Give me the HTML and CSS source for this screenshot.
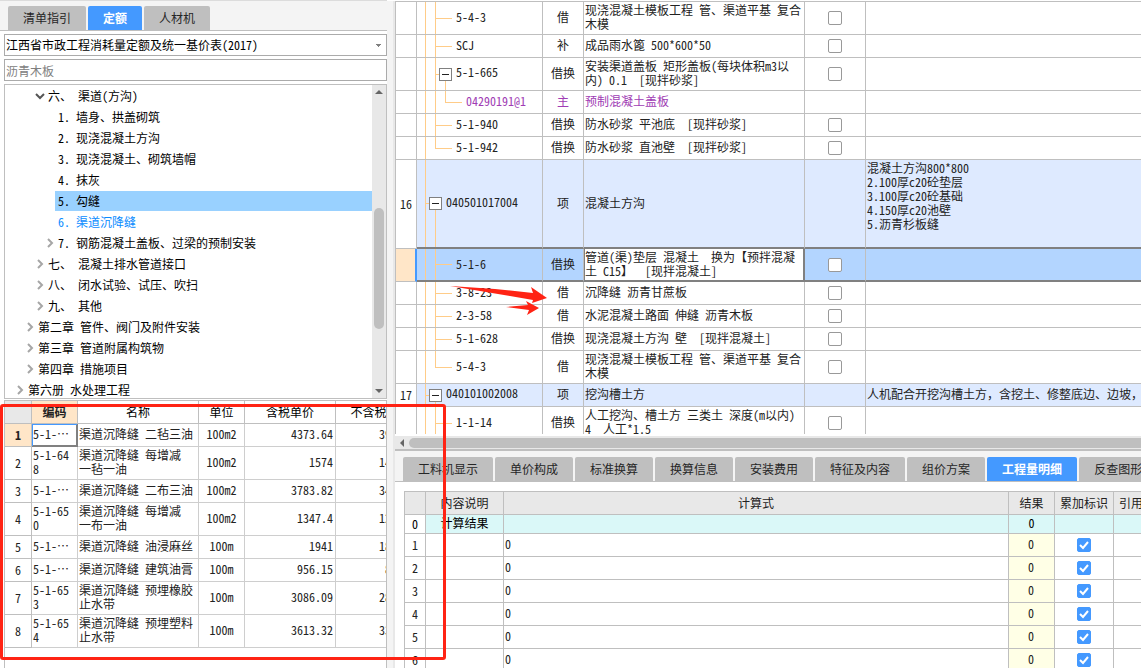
FILE: index.html
```html
<!DOCTYPE html>
<html lang="zh-CN">
<head>
<meta charset="utf-8">
<title>定额</title>
<link rel="stylesheet" href="styles.css">
</head>
<body>
<div class="app">
  <aside class="side">
    <nav class="tabs side-tabs">
      <button class="tab">清单指引</button>
      <button class="tab active">定额</button>
      <button class="tab">人材机</button>
    </nav>
    <div class="filters">
      <select class="field" aria-label="定额库"><option>江西省市政工程消耗量定额及统一基价表(2017)</option></select>
      <input class="field" type="text" aria-label="搜索" placeholder="沥青木板">
    </div>
    <div class="tree-box">
      <ul class="tree">
        <li class="lv2"><svg class="chev" viewBox="0 0 10 10"><path class="open" d="M1 3l4 4 4-4"/></svg><span>六、 渠道(方沟)</span></li>
        <li class="lv3"><i class="chev"></i><span>1. 墙身、拱盖砌筑</span></li>
        <li class="lv3"><i class="chev"></i><span>2. 现浇混凝土方沟</span></li>
        <li class="lv3"><i class="chev"></i><span>3. 现浇混凝土、砌筑墙帽</span></li>
        <li class="lv3"><i class="chev"></i><span>4. 抹灰</span></li>
        <li class="lv3 picked"><i class="chev"></i><span>5. 勾缝</span></li>
        <li class="lv3 linked"><i class="chev"></i><span>6. 渠道沉降缝</span></li>
        <li class="lv3"><svg class="chev" viewBox="0 0 10 10"><path d="M3 1l4 4-4 4"/></svg><span>7. 钢筋混凝土盖板、过梁的预制安装</span></li>
        <li class="lv2"><svg class="chev" viewBox="0 0 10 10"><path d="M3 1l4 4-4 4"/></svg><span>七、 混凝土排水管道接口</span></li>
        <li class="lv2"><svg class="chev" viewBox="0 0 10 10"><path d="M3 1l4 4-4 4"/></svg><span>八、 闭水试验、试压、吹扫</span></li>
        <li class="lv2"><svg class="chev" viewBox="0 0 10 10"><path d="M3 1l4 4-4 4"/></svg><span>九、 其他</span></li>
        <li class="lv1"><svg class="chev" viewBox="0 0 10 10"><path d="M3 1l4 4-4 4"/></svg><span>第二章 管件、阀门及附件安装</span></li>
        <li class="lv1"><svg class="chev" viewBox="0 0 10 10"><path d="M3 1l4 4-4 4"/></svg><span>第三章 管道附属构筑物</span></li>
        <li class="lv1"><svg class="chev" viewBox="0 0 10 10"><path d="M3 1l4 4-4 4"/></svg><span>第四章 措施项目</span></li>
        <li class="lv0"><svg class="chev" viewBox="0 0 10 10"><path d="M3 1l4 4-4 4"/></svg><span>第六册 水处理工程</span></li>
      </ul>
      <div class="vbar">
        <svg class="arrow" viewBox="0 0 8 4"><path d="M0 4L4 0l4 4z"/></svg>
        <div class="vthumb"></div>
        <svg class="arrow" viewBox="0 0 8 4"><path d="M0 0l4 4 4-4z"/></svg>
      </div>
    </div>
    <div class="quota">
      <table class="quota-table">
        <colgroup><col class="q-no"><col class="q-code"><col class="q-name"><col class="q-unit"><col class="q-price"><col class="q-net"></colgroup>
        <thead><tr><th class="corner"></th><th class="hot">编码</th><th>名称</th><th>单位</th><th>含税单价</th><th>不含税单价</th></tr></thead>
        <tbody>
          <tr><th class="hot">1</th><td class="code focus">5-1-…</td><td>渠道沉降缝 二毡三油</td><td class="mid">100m2</td><td class="num">4373.64</td><td class="net">3977.48</td></tr>
          <tr class="tall"><th>2</th><td class="code">5-1-648</td><td>渠道沉降缝 每增减<br>一毡一油</td><td class="mid">100m2</td><td class="num">1574</td><td class="net">1431.22</td></tr>
          <tr><th>3</th><td class="code">5-1-…</td><td>渠道沉降缝 二布三油</td><td class="mid">100m2</td><td class="num">3783.82</td><td class="net">3440.16</td></tr>
          <tr class="tall"><th>4</th><td class="code">5-1-650</td><td>渠道沉降缝 每增减<br>一布一油</td><td class="mid">100m2</td><td class="num">1347.4</td><td class="net">1225.17</td></tr>
          <tr><th>5</th><td class="code">5-1-…</td><td>渠道沉降缝 油浸麻丝</td><td class="mid">100m</td><td class="num">1941</td><td class="net">1808.31</td></tr>
          <tr><th>6</th><td class="code">5-1-…</td><td>渠道沉降缝 建筑油膏</td><td class="mid">100m</td><td class="num">956.15</td><td class="net">&nbsp;878.54</td></tr>
          <tr class="tall"><th>7</th><td class="code">5-1-653</td><td>渠道沉降缝 预埋橡胶<br>止水带</td><td class="mid">100m</td><td class="num">3086.09</td><td class="net">2810.67</td></tr>
          <tr class="tall"><th>8</th><td class="code">5-1-654</td><td>渠道沉降缝 预埋塑料<br>止水带</td><td class="mid">100m</td><td class="num">3613.32</td><td class="net">3310.28</td></tr>
        </tbody>
      </table>
    </div>
  </aside>
  <div class="splitter"></div>
  <main class="main">
    <section class="bill">
      <div class="bill-view">
        <table class="bill-table">
          <colgroup><col class="b-no"><col class="b-code"><col class="b-kind"><col class="b-name"><col class="b-tick"><col></colgroup>
          <tbody>
            <tr class="tall"><th></th><td class="branch mid-node">5-4-3</td><td class="mid">借</td><td>现浇混凝土模板工程 管、渠道平基 复合<br>木模</td><td class="mid tick"><input type="checkbox" aria-label="5-4-3"></td><td></td></tr>
            <tr><th></th><td class="branch mid-node">SCJ</td><td class="mid">补</td><td>成品雨水篦 500*600*50</td><td class="mid tick"><input type="checkbox" aria-label="SCJ"></td><td></td></tr>
            <tr class="tall"><th></th><td class="branch sub-open"><button class="fold" aria-label="折叠"></button>5-1-665</td><td class="mid">借换</td><td>安装渠道盖板 矩形盖板(每块体积m3以<br>内) 0.1&nbsp; [现拌砂浆]</td><td class="mid tick"><input type="checkbox" aria-label="5-1-665"></td><td></td></tr>
            <tr class="material"><th></th><td class="branch leaf">04290191@1</td><td class="mid">主</td><td>预制混凝土盖板</td><td></td><td></td></tr>
            <tr><th></th><td class="branch mid-node">5-1-940</td><td class="mid">借换</td><td>防水砂浆 平池底&nbsp; [现拌砂浆]</td><td class="mid tick"><input type="checkbox" aria-label="5-1-940"></td><td></td></tr>
            <tr><th></th><td class="branch end-node">5-1-942</td><td class="mid">借换</td><td>防水砂浆 直池壁&nbsp; [现拌砂浆]</td><td class="mid tick"><input type="checkbox" aria-label="5-1-942"></td><td></td></tr>
            <tr class="item big"><th>16</th><td class="branch root-open"><button class="fold" aria-label="折叠"></button>040501017004</td><td class="mid">项</td><td>混凝土方沟</td><td></td><td class="desc">混凝土方沟800*800<br>2.100厚c20砼垫层<br>3.100厚c20砼基础<br>4.150厚c20池壁<br>5.沥青杉板缝</td></tr>
            <tr class="tall current"><th></th><td class="branch mid-node">5-1-6</td><td class="mid">借换</td><td class="editing">管道(渠)垫层 混凝土&nbsp; 换为【预拌混凝<br>土 C15】&nbsp; [现拌混凝土]</td><td class="mid tick"><input type="checkbox" aria-label="5-1-6"></td><td></td></tr>
            <tr><th></th><td class="branch mid-node">3-8-23</td><td class="mid">借</td><td>沉降缝 沥青甘蔗板</td><td class="mid tick"><input type="checkbox" aria-label="3-8-23"></td><td></td></tr>
            <tr><th></th><td class="branch mid-node">2-3-58</td><td class="mid">借</td><td>水泥混凝土路面 伸缝 沥青木板</td><td class="mid tick"><input type="checkbox" aria-label="2-3-58"></td><td></td></tr>
            <tr><th></th><td class="branch mid-node">5-1-628</td><td class="mid">借换</td><td>现浇混凝土方沟 壁&nbsp; [现拌混凝土]</td><td class="mid tick"><input type="checkbox" aria-label="5-1-628"></td><td></td></tr>
            <tr class="tall"><th></th><td class="branch end-node">5-4-3</td><td class="mid">借</td><td>现浇混凝土模板工程 管、渠道平基 复合<br>木模</td><td class="mid tick"><input type="checkbox" aria-label="5-4-3"></td><td></td></tr>
            <tr class="item"><th>17</th><td class="branch root-open"><button class="fold" aria-label="折叠"></button>040101002008</td><td class="mid">项</td><td>挖沟槽土方</td><td></td><td class="wide">人机配合开挖沟槽土方，含挖土、修整底边、边坡，</td></tr>
            <tr class="tall"><th></th><td class="branch mid-node">1-1-14</td><td class="mid">借换</td><td>人工挖沟、槽土方 三类土 深度(m以内)<br>4&nbsp; 人工*1.5</td><td class="mid tick"><input type="checkbox" aria-label="1-1-14"></td><td></td></tr>
          </tbody>
        </table>
      </div>
      <div class="hbar">
        <svg class="arrow-left" viewBox="0 0 4 8"><path d="M4 0L0 4l4 4z"/></svg>
        <div class="hthumb"></div>
      </div>
    </section>
    <section class="detail">
      <nav class="tabs">
        <button class="tab">工料机显示</button>
        <button class="tab">单价构成</button>
        <button class="tab">标准换算</button>
        <button class="tab">换算信息</button>
        <button class="tab">安装费用</button>
        <button class="tab">特征及内容</button>
        <button class="tab">组价方案</button>
        <button class="tab active">工程量明细</button>
        <button class="tab">反查图形工程量</button>
      </nav>
      <div class="calc-view">
        <table class="calc-table">
          <colgroup><col class="c-no"><col class="c-note"><col><col class="c-sum"><col class="c-flag"><col class="c-ref"></colgroup>
          <thead><tr><th></th><th>内容说明</th><th>计算式</th><th>结果</th><th>累加标识</th><th class="ref">引用代码</th></tr></thead>
          <tbody>
            <tr class="total"><th>0</th><td class="mid">计算结果</td><td></td><td class="mid">0</td><td></td><td></td></tr>
            <tr><th>1</th><td></td><td>0</td><td class="sum">0</td><td class="mid tick"><input type="checkbox" checked aria-label="累加 1"></td><td></td></tr>
            <tr><th>2</th><td></td><td>0</td><td class="sum">0</td><td class="mid tick"><input type="checkbox" checked aria-label="累加 2"></td><td></td></tr>
            <tr><th>3</th><td></td><td>0</td><td class="sum">0</td><td class="mid tick"><input type="checkbox" checked aria-label="累加 3"></td><td></td></tr>
            <tr><th>4</th><td></td><td>0</td><td class="sum">0</td><td class="mid tick"><input type="checkbox" checked aria-label="累加 4"></td><td></td></tr>
            <tr><th>5</th><td></td><td>0</td><td class="sum">0</td><td class="mid tick"><input type="checkbox" checked aria-label="累加 5"></td><td></td></tr>
            <tr><th>6</th><td></td><td>0</td><td class="sum">0</td><td class="mid tick"><input type="checkbox" checked aria-label="累加 6"></td><td></td></tr>
          </tbody>
        </table>
      </div>
    </section>
  </main>
  <div class="mark-box"></div>
  <svg class="mark-arrows" viewBox="0 0 100 34" aria-hidden="true">
    <path d="M0 2L45 5 83 9 81 3 97 14 82 19 83 16 60 12 30 7z"/>
    <path d="M56 23L78 21 76 17 89 24 77 31 79 26z"/>
  </svg>
</div>
</body>
</html>
```
FILE: styles.css
```css
* { box-sizing: border-box; }

body {
  margin: 0;
  font-family: "Noto Sans CJK SC", sans-serif;
  font-feature-settings: "hwid";
  font-size: 12px;
  line-height: 14px;
  color: #222;
  background: #fff;
}

button, input, select {
  font: inherit;
  font-feature-settings: inherit;
  color: inherit;
  margin: 0;
}

.app {
  position: relative;
  display: grid;
  grid-template-columns: 387px 8px minmax(0, 1fr);
  grid-template-rows: minmax(0, 1fr);
  height: 100vh;
  overflow: hidden;
}

/* tabs */
.tabs {
  display: flex;
  gap: 2px;
  padding: 6px 0 0 8px;
  background: #f4f4f4;
  border-bottom: 1px solid #bfbfbf;
  overflow: hidden;
}
.tab {
  flex: none;
  height: 24px;
  padding: 0 15px;
  border: 0;
  border-radius: 2px 2px 0 0;
  background: #bfbfbf;
  color: #262626;
}
.tab.active {
  background: #4499ff;
  color: #fff;
  font-weight: 700;
}

/* left side */
.side {
  display: grid;
  grid-template-rows: auto auto minmax(0, 315fr) minmax(0, 269fr);
  min-width: 0;
}
.side-tabs { border-top: 1px solid #dcdcdc; padding-top: 5px; }
.filters {
  display: grid;
  gap: 3px;
  padding: 3px 0 3px 4px;
}
.field {
  width: 100%;
  height: 22px;
  padding: 0 1px;
  border: 1px solid #ababab;
  border-radius: 0;
  background: #fff;
  color: #000;
  outline: 0;
}
select.field {
  appearance: none;
  background: linear-gradient(#808080, #808080) right 5px top 9px / 5px 1px no-repeat,
    linear-gradient(#808080, #808080) right 6px top 10px / 3px 1px no-repeat,
    linear-gradient(#808080, #808080) right 7px top 11px / 1px 1px no-repeat, #fff;
}
.field::placeholder { color: #808080; opacity: 1; }

.tree-box {
  display: flex;
  margin-left: 4px;
  border: 1px solid #bfbfbf;
  overflow: hidden;
}
.tree {
  flex: 1;
  margin: 0;
  padding: 0;
  list-style: none;
  color: #000;
}
.tree li { display: flex; align-items: center; height: 21px; }
.tree span { flex: 1; padding-left: 3px; line-height: 20px; white-space: nowrap; }
.chev { flex: none; width: 10px; height: 10px; }
.chev path { fill: none; stroke: #a6a6a6; stroke-width: 2; }
.chev .open { stroke: #555; }
.lv0 { padding-left: 10px; }
.lv1 { padding-left: 20px; }
.lv2 { padding-left: 30px; }
.lv3 { padding-left: 40px; }
.picked span { background: #99d1ff; }
.linked { color: #0a8cff; }

.vbar {
  display: flex;
  flex-direction: column;
  align-items: center;
  justify-content: space-between;
  width: 14px;
  padding: 5px 0;
  background: #e8e8e8;
}
.arrow { width: 8px; height: 4px; fill: #666; }
.vthumb { width: 10px; height: 40%; margin-top: 54px; border-radius: 5px; background: #bfbfbf; }

/* tables */
table { border-collapse: separate; border-spacing: 0; table-layout: fixed; }
th, td {
  height: 23px;
  padding: 0 2px 0 1px;
  border: solid #bfbfbf;
  border-width: 0 1px 1px 0;
  font-weight: 400;
  text-align: left;
  white-space: nowrap;
  overflow: hidden;
}
td { padding-bottom: 2px; }
th { padding: 0; text-align: center; }
.mid { text-align: center; padding-left: 0; padding-right: 0; }
.tick { padding-bottom: 0; }
.wide { font-feature-settings: normal; }
.tall > * { height: 33px; }

.quota {
  margin: 1px 0 0 4px;
  border: solid #bfbfbf;
  border-width: 1px 1px 0;
  overflow: hidden;
}
.quota-table { width: 422px; border-left: 1px solid #bfbfbf; margin-left: -1px; }
.quota td { border-color: #cecece; }
.quota thead th { color: #000; }
.q-no { width: 27px; }
.q-code { width: 46px; }
.q-name { width: 121px; }
.q-unit { width: 46px; }
.q-price { width: 91px; }
.q-net { width: 90px; }
.quota .corner { background: #e8e8e8; }
.quota .hot { background: #ffe6c8; font-weight: 700; color: #222; }
.quota .code { white-space: normal; word-break: break-all; padding-right: 4px; }
.quota .num { text-align: right; }
.quota .net { padding-left: 43px; }
.quota .focus { box-shadow: inset 1px 1px #4499ff, inset -1px -1px #808080; border-color: #808080; }

.splitter {
  margin-top: 1px;
  background: #f4f4f4;
  border-right: 2px solid #e8e8e8;
}

/* bill grid */
.main {
  display: grid;
  grid-template-rows: minmax(0, 451fr) minmax(0, 217fr);
  min-width: 0;
}
.bill {
  display: flex;
  flex-direction: column;
  padding-top: 1px;
  border-bottom: 2px solid #bfbfbf;
}
.bill-view { flex: 1; min-height: 0; overflow: hidden; margin-bottom: 2px; border: solid #bfbfbf; border-width: 1px 0 0 1px; }
.bill-table { width: 100%; }
.b-no { width: 21px; }
.b-code { width: 126px; }
.b-kind { width: 41px; }
.b-name { width: 221px; }
.b-tick { width: 61px; }
.bill-table td:last-child { border-right: 0; }
.item td { background-color: #deeaff; }
.big > * { height: 89px; border-bottom: 2px solid #808080; }
.big th { border-bottom: 1px solid #bfbfbf; }
.desc { vertical-align: top; padding-top: 1px; }
.material { color: #a03cb4; }
.current td { background-color: #b3d5ff; border-bottom: 2px solid #808080; }
.current th { background: #ffe6c8; border-right: 2px solid #4499ff; }
.current .editing { background: #fff; border-right: 2px solid #808080; box-shadow: inset 1px 0 #808080; }

.branch {
  --line: linear-gradient(#ffcc88, #ffcc88);
  background-repeat: no-repeat;
  vertical-align: middle;
}
.mid-node {
  padding-left: 39px;
  background-image: var(--line), var(--line), var(--line);
  background-position: 8px 0, 18px 0, 18px 50%;
  background-size: 1px 100%, 1px 100%, 17px 1px;
}
.end-node {
  padding-left: 39px;
  background-image: var(--line), var(--line), var(--line);
  background-position: 8px 0, 18px 0, 18px 50%;
  background-size: 1px 100%, 1px 50%, 17px 1px;
}
.sub-open {
  padding-left: 22px;
  background-image: var(--line), var(--line), var(--line), var(--line);
  background-position: 8px 0, 18px 0, 18px 50%, 28px 100%;
  background-size: 1px 100%, 1px 100%, 6px 1px, 1px 50%;
}
.leaf {
  padding-left: 49px;
  background-image: var(--line), var(--line), var(--line), var(--line);
  background-position: 8px 0, 18px 0, 28px 0, 28px 50%;
  background-size: 1px 100%, 1px 100%, 1px 50%, 17px 1px;
}
.root-open {
  padding-left: 12px;
  background-image: var(--line), var(--line), var(--line);
  background-position: 8px 0, 8px 50%, 18px 100%;
  background-size: 1px 100%, 6px 1px, 1px 50%;
}
.fold {
  width: 13px;
  height: 13px;
  margin-right: 4px;
  padding: 0;
  border: 1px solid #808080;
  vertical-align: middle;
  background: linear-gradient(#222, #222) center / 7px 1px no-repeat, #fff;
}

input[type="checkbox"] {
  appearance: none;
  display: block;
  width: 14px;
  height: 14px;
  margin: 0 auto;
  border: 1px solid #999;
  border-radius: 2px;
  background: #fff;
}
input[type="checkbox"]:checked {
  border-color: #4499ff;
  background: #4499ff url("data:image/svg+xml,%3Csvg xmlns='http://www.w3.org/2000/svg' viewBox='0 0 12 12'%3E%3Cpath d='M2 6l3 3 5-6' fill='none' stroke='white' stroke-width='2'/%3E%3C/svg%3E") center / 12px 12px no-repeat;
}

.hbar {
  display: flex;
  align-items: center;
  gap: 5px;
  height: 13px;
  padding-left: 5px;
  background: #e8e8e8;
}
.arrow-left { width: 4px; height: 8px; fill: #666; }
.hthumb { flex: 1; height: 10px; border-radius: 5px 0 0 5px; background: #bfbfbf; }

/* calculation detail */
.detail { min-width: 0; overflow: hidden; }
.calc-view { padding: 9px 0 0 9px; overflow: hidden; }
.calc-table { width: calc(100% + 29px); border: solid #bfbfbf; border-width: 1px 0 0 1px; }
.calc-table thead th { background: #e8e8e8; }
.calc-table .ref { text-align: left; padding-left: 5px; }
.c-no { width: 21px; }
.c-note { width: 78px; }
.c-sum { width: 46px; }
.c-flag { width: 59px; }
.c-ref { width: 56px; }
.total > * { height: 19px; color: #000; }
.total td { background: #daf8f8; }
.sum { background: #ffffe6; text-align: center; }

/* annotations over the window */
.mark-box {
  position: absolute;
  left: 0;
  top: 404px;
  width: 446px;
  height: 256px;
  border: 3px solid #ff2314;
  border-radius: 3px;
  pointer-events: none;
}
.mark-arrows {
  position: absolute;
  left: 450px;
  top: 284px;
  width: 100px;
  height: 34px;
  fill: #ff2314;
  pointer-events: none;
}
```
